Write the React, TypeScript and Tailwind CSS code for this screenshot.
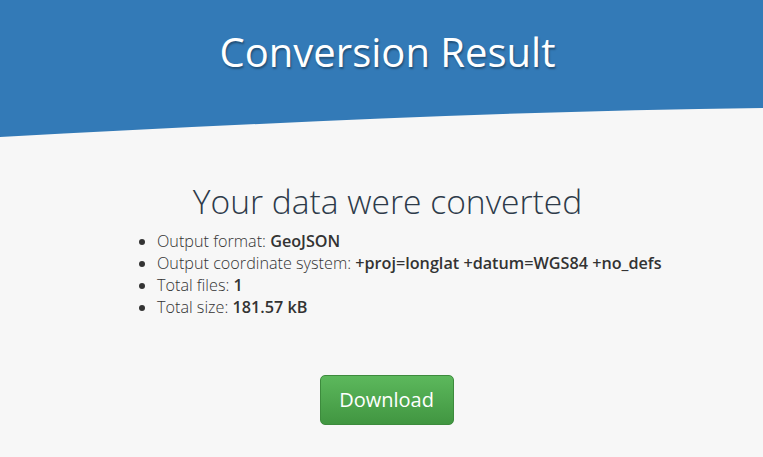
export default function App() {
  return (
    <div className="min-h-[457px] bg-[#f7f7f7] font-['Open_Sans',sans-serif] text-[#333]">
      <header className="bg-[#337ab7]">
        <h1 className="pl-[12px] pt-[23px] pb-[27px] text-center text-[40px] leading-[58px] text-white [text-shadow:1px_2px_2px_rgba(0,0,0,0.35)]">
          Conversion Result
        </h1>
      </header>
      <svg className="block w-full h-[29px]" viewBox="0 0 763 29" preserveAspectRatio="none">
        <path d="M0 0 H763 V0 C500 3 250 16 0 29 Z" fill="#337ab7" />
      </svg>
      <main className="pl-[12px] pt-[42px]">
        <h2 className="text-center text-[33.6px] font-light leading-[44px] text-[#2e3b4a]">
          Your data were converted
        </h2>
        <ul className="ml-[125px] mt-[7px] list-disc pl-[20px] text-[16.2px] leading-[22px] font-light">
          <li>
            Output format: <b className="font-semibold">GeoJSON</b>
          </li>
          <li>
            Output coordinate system: <b className="font-semibold">+proj=longlat +datum=WGS84 +no_defs</b>
          </li>
          <li>
            Total files: <b className="font-semibold">1</b>
          </li>
          <li>
            Total size: <b className="font-semibold">181.57 kB</b>
          </li>
        </ul>
        <div className="mt-[57px] flex justify-center pr-[2px]">
          <button className="h-[50px] w-[134px] rounded-[5px] border border-[#3d8b3d] bg-gradient-to-b from-[#5cb85c] to-[#419641] text-[20px] text-white">
            Download
          </button>
        </div>
      </main>
    </div>
  );
}
